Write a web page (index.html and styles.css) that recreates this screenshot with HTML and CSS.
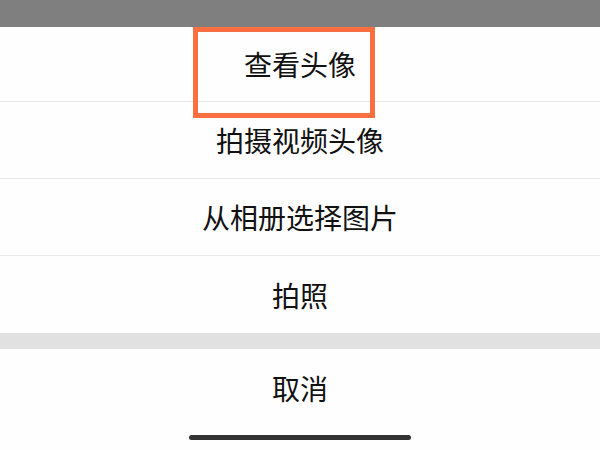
FILE: index.html
```html
<!DOCTYPE html>
<html lang="zh">
<head>
<meta charset="utf-8">
<title>头像操作</title>
<link rel="stylesheet" href="styles.css">
</head>
<body>
<div class="screen">
  <div class="dim"></div>
  <div class="sheet">
    <div class="item item-first">查看头像</div>
    <div class="item">拍摄视频头像</div>
    <div class="item">从相册选择图片</div>
    <div class="item item-last">拍照</div>
  </div>
  <div class="gap"></div>
  <div class="cancel">取消</div>
  <div class="home"><div class="home-bar"></div></div>
  <div class="highlight"></div>
</div>
</body>
</html>
```

FILE: styles.css
```css
html, body {
  margin: 0;
  padding: 0;
}
body {
  width: 600px;
  height: 450px;
  overflow: hidden;
  background: #fefefe;
  font-family: "Noto Sans CJK SC", "Noto Sans", sans-serif;
  color: #111111;
}
.screen {
  position: relative;
  width: 600px;
  height: 450px;
  display: flex;
  flex-direction: column;
}
.dim {
  height: 27px;
  background: #7f7f7f;
  flex: none;
}
.sheet {
  display: flex;
  flex-direction: column;
  background: #fefefe;
}
.item {
  height: 76px;
  box-sizing: content-box;
  display: flex;
  align-items: center;
  justify-content: center;
  font-size: 28px;
  padding-top: 0;
  border-bottom: 1px solid #e8e8e8;
}
.item-first {
  height: 74px;
}
.item-last {
  height: 77px;
  border-bottom: none;
}
.gap {
  height: 16px;
  background: #e1e1e1;
  flex: none;
}
.cancel {
  height: 78px;
  display: flex;
  align-items: center;
  justify-content: center;
  font-size: 28px;
}
.home {
  display: flex;
  justify-content: center;
  padding-top: 8px;
}
.home-bar {
  width: 222px;
  height: 5px;
  border-radius: 3px;
  background: #333333;
}
.highlight {
  position: absolute;
  left: 193px;
  top: 27px;
  width: 172px;
  height: 81px;
  border: 5px solid #fa6e3f;
}
```
